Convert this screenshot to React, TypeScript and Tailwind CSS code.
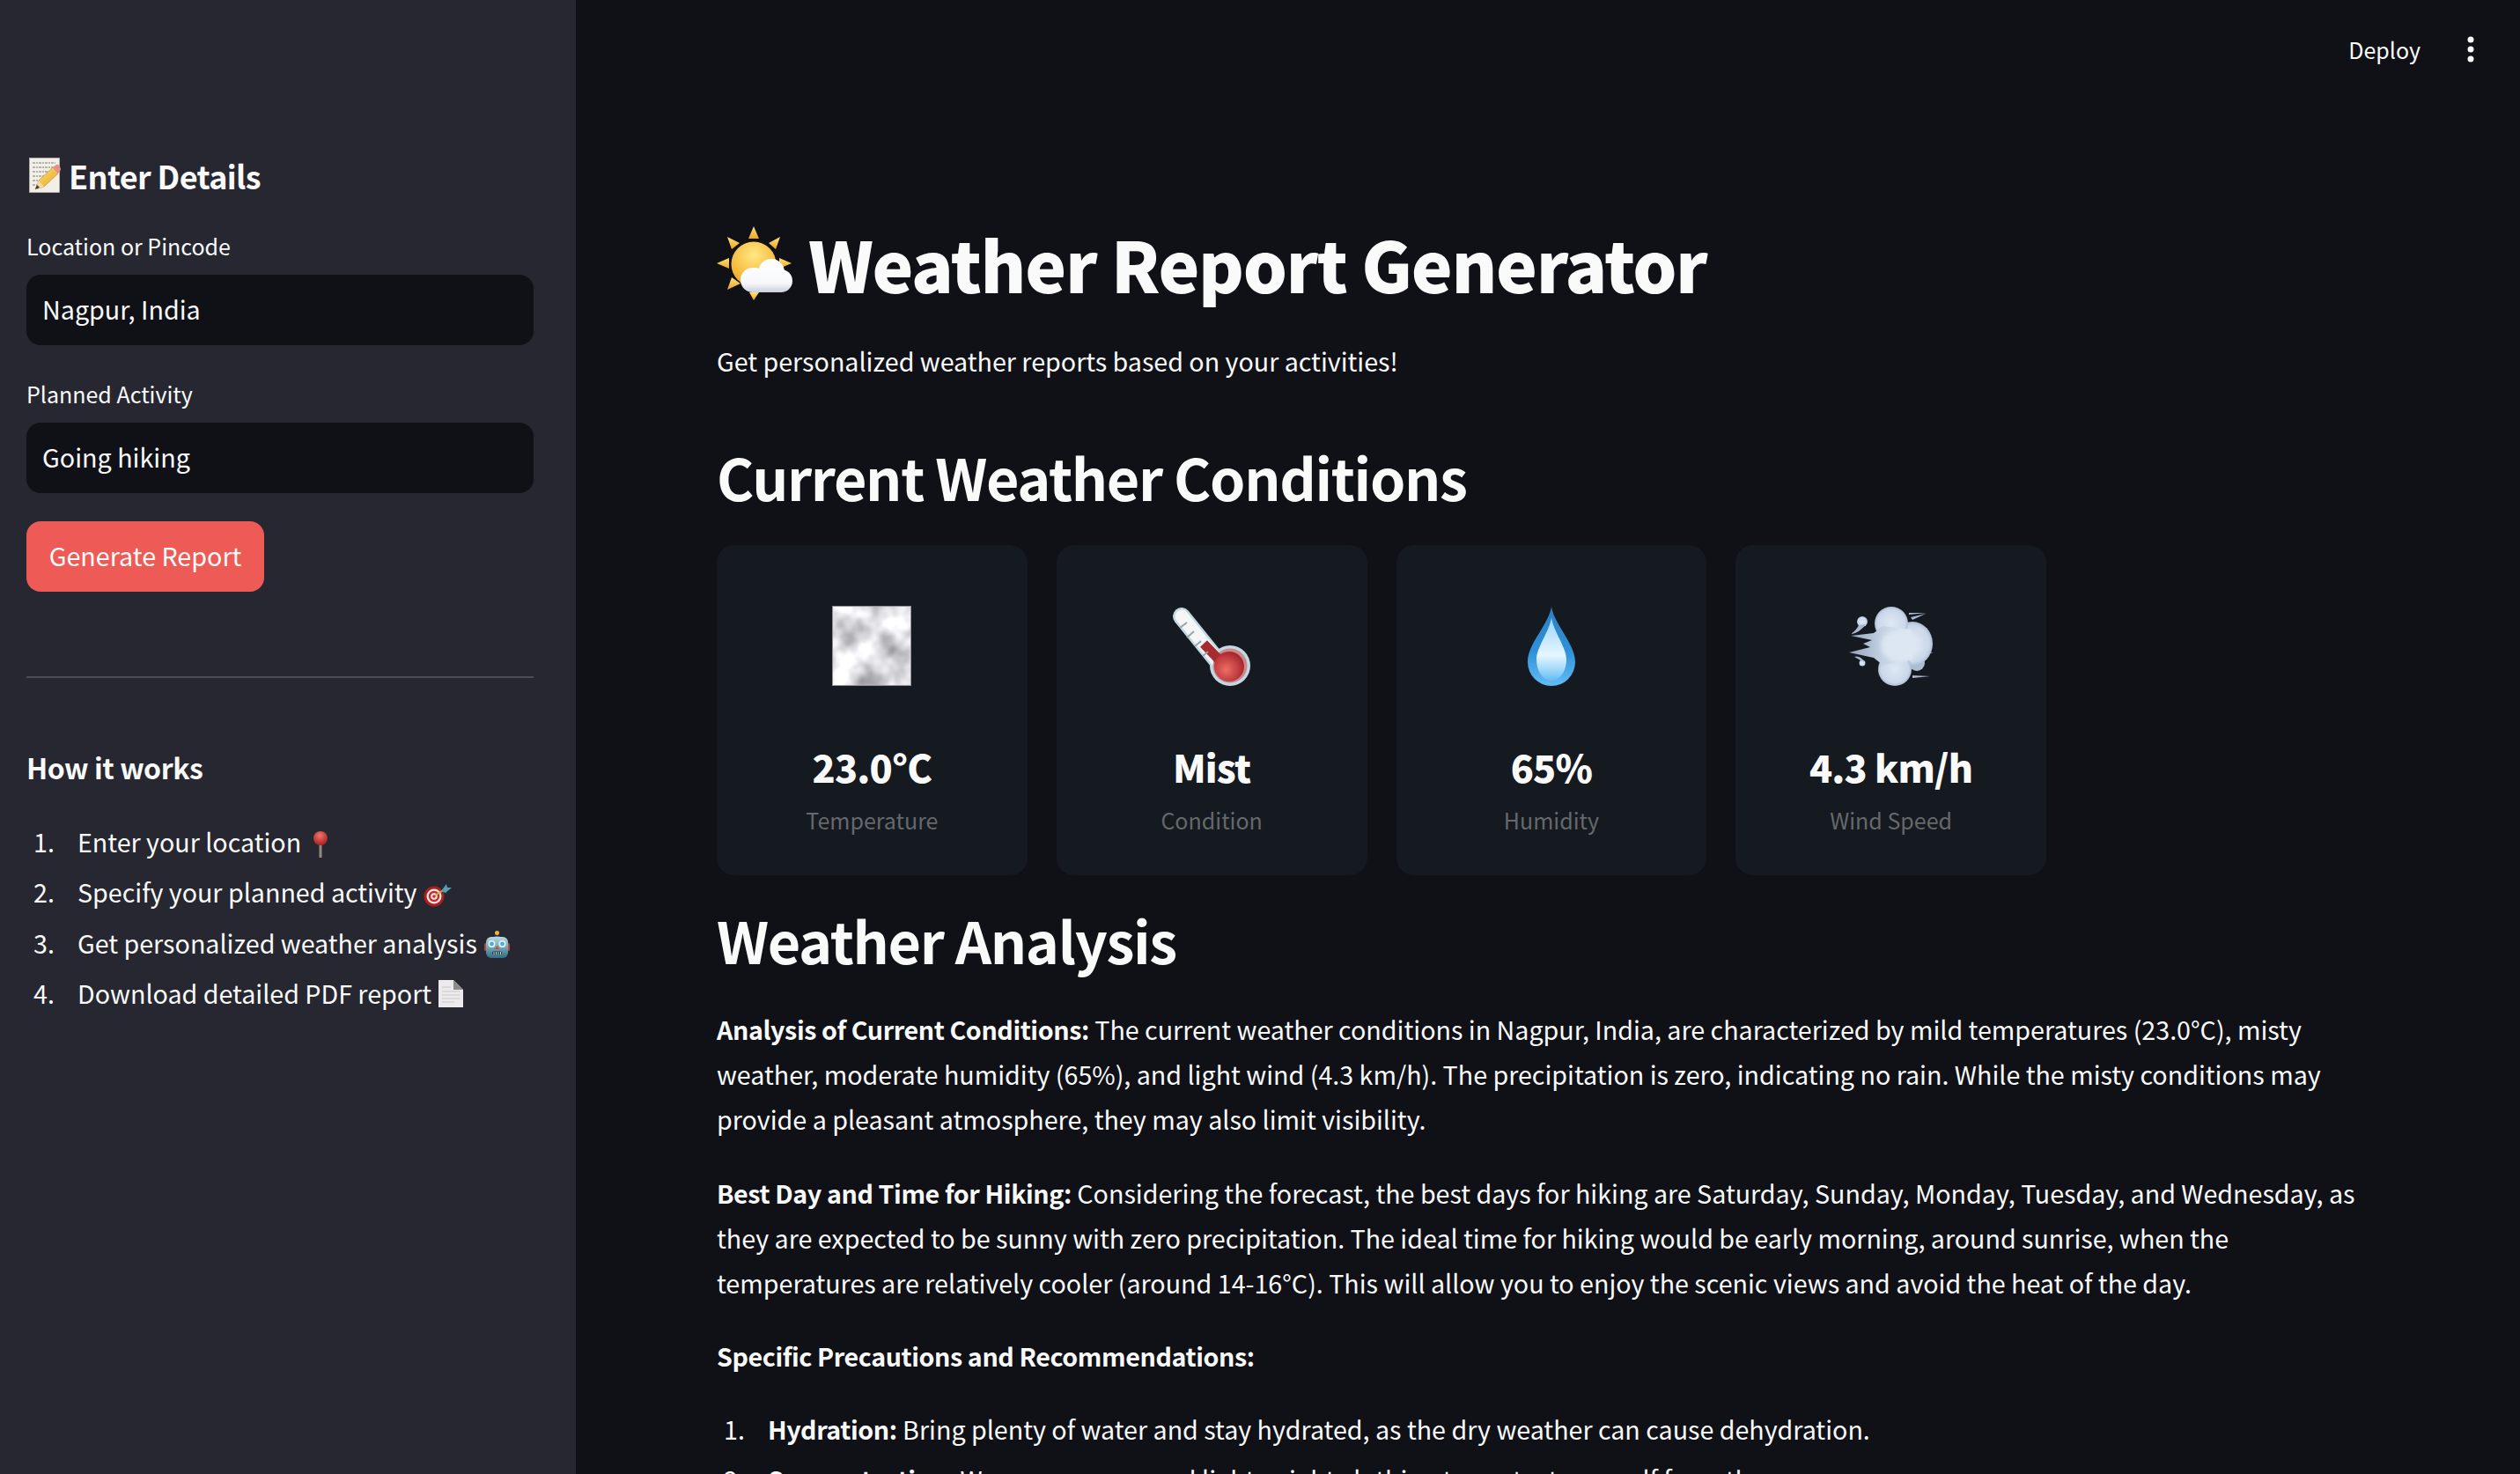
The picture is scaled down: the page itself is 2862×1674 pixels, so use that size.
import React from 'react';

function MemoIcon() {
  return (
    <svg width="36" height="40" viewBox="0 0 36 40" className="ml-[3px] shrink-0">
      <defs>
        <linearGradient id="pencil" x1="0" y1="0" x2="1" y2="1">
          <stop offset="0" stopColor="#fde17a" />
          <stop offset="1" stopColor="#e9a51f" />
        </linearGradient>
      </defs>
      <rect x="0.5" y="0.5" width="34" height="39" fill="#f1efe8" stroke="#c9c7c0" strokeWidth="0.6" />
      <g stroke="#6d6b66" strokeWidth="0.9" strokeDasharray="3 1 2 1">
        <line x1="4" y1="6" x2="30" y2="6" />
        <line x1="4" y1="11" x2="28" y2="11" />
        <line x1="4" y1="16" x2="29" y2="16" />
        <line x1="4" y1="21" x2="20" y2="21" />
        <line x1="4" y1="26" x2="14" y2="26" />
        <line x1="4" y1="31" x2="10" y2="31" />
      </g>
      <path d="M7 36 L11 26 L27 11 L33 18 L17 33 Z" fill="url(#pencil)" stroke="#a8791a" strokeWidth="0.5" />
      <path d="M7 36 L11 26 L17 33 Z" fill="#f4d9a8" />
      <path d="M7 36 L9 31 L12 34 Z" fill="#3b342b" />
      <path d="M27 11 L31 8 Q33 7 35 10 L36 13 Q36 15 33 18 Z" fill="#e58f92" />
    </svg>
  );
}

function PinIcon() {
  return (
    <svg width="16" height="30" viewBox="0 0 16 30" className="ml-[14px] inline-block align-[-6px]">
      <defs>
        <radialGradient id="pinHead" cx="0.45" cy="0.3" r="0.7">
          <stop offset="0" stopColor="#f0736c" />
          <stop offset="1" stopColor="#a9201f" />
        </radialGradient>
      </defs>
      <rect x="6.5" y="13" width="3" height="17" fill="#8f8a84" />
      <circle cx="8" cy="8" r="8" fill="url(#pinHead)" />
    </svg>
  );
}

function TargetIcon() {
  return (
    <svg width="32" height="27" viewBox="0 0 32 27" className="ml-[7px] inline-block align-[-5px]">
      <circle cx="12" cy="15" r="11.5" fill="#a82020" />
      <circle cx="12" cy="15" r="8.5" fill="#f1e6e2" />
      <circle cx="12" cy="15" r="6.2" fill="#c62d2a" />
      <circle cx="12" cy="15" r="3.8" fill="#f1e6e2" />
      <circle cx="12" cy="15" r="1.8" fill="#c62d2a" />
      <line x1="13" y1="14" x2="24" y2="7" stroke="#d7b04a" strokeWidth="1.6" />
      <path d="M20 9 L26 1 L27 5 L32 5 L25 11 Z" fill="#4fa3b5" />
    </svg>
  );
}

function RobotIcon() {
  return (
    <svg width="29" height="31" viewBox="0 0 29 31" className="ml-[8px] inline-block align-[-5px]">
      <defs>
        <linearGradient id="robotFace" x1="0" y1="0" x2="0" y2="1">
          <stop offset="0" stopColor="#b7dae3" />
          <stop offset="1" stopColor="#2f6f82" />
        </linearGradient>
      </defs>
      <circle cx="14.5" cy="2.5" r="2.5" fill="#f0b43a" />
      <path d="M9 8 Q14.5 3 20 8 Z" fill="#6d5aa8" />
      <rect x="0" y="14" width="3" height="9" rx="1.5" fill="#b5473f" />
      <rect x="26" y="14" width="3" height="9" rx="1.5" fill="#b5473f" />
      <rect x="2" y="7" width="25" height="24" rx="6" fill="url(#robotFace)" />
      <circle cx="8.5" cy="15" r="4" fill="#e8f5f9" />
      <circle cx="8.5" cy="15" r="2.4" fill="#4ab0d0" />
      <circle cx="20.5" cy="15" r="4" fill="#e8f5f9" />
      <circle cx="20.5" cy="15" r="2.4" fill="#4ab0d0" />
      <path d="M14.5 17 L17 21 L12 21 Z" fill="#d04a3c" />
      <rect x="9" y="23.5" width="11" height="3.5" rx="1.5" fill="#1e3a45" />
      <path d="M11 24 V27 M13.5 24 V27 M16 24 V27 M18.5 24 V27" stroke="#cfd8dc" strokeWidth="1" />
    </svg>
  );
}

function PageIcon() {
  return (
    <svg width="28" height="31" viewBox="0 0 28 31" className="ml-[8px] inline-block align-[-4px]">
      <path d="M0 0 H17 L28 11 V31 H0 Z" fill="#eceaea" />
      <path d="M17 0 L28 11 H17 Z" fill="#8b8b8b" />
      <g stroke="#c9c7c7" strokeWidth="1">
        <line x1="4" y1="8" x2="14" y2="8" />
        <line x1="4" y1="13" x2="24" y2="13" />
        <line x1="4" y1="17" x2="24" y2="17" />
        <line x1="4" y1="21" x2="24" y2="21" />
        <line x1="4" y1="25" x2="18" y2="25" />
      </g>
    </svg>
  );
}

function SunCloudIcon() {
  return (
    <svg width="86" height="85" viewBox="16 8 86 85" className="shrink-0">
      <defs>
        <linearGradient id="ray" x1="0" y1="0" x2="0" y2="1">
          <stop offset="0" stopColor="#fde27a" />
          <stop offset="1" stopColor="#eea522" />
        </linearGradient>
        <radialGradient id="sunBall" cx="0.5" cy="0.3" r="0.75">
          <stop offset="0" stopColor="#ffe883" />
          <stop offset="1" stopColor="#f0a51e" />
        </radialGradient>
        <linearGradient id="cloudFill" gradientUnits="userSpaceOnUse" x1="0" y1="46" x2="0" y2="84">
          <stop offset="0" stopColor="#ffffff" />
          <stop offset="0.7" stopColor="#f7f8fb" />
          <stop offset="1" stopColor="#c6ccda" />
        </linearGradient>
      </defs>
      <g fill="url(#ray)">
        <polygon points="58,8 52,22 64,22" />
        <polygon points="28,20 42,27 33,34" />
        <polygon points="88,20 75,27 83,34" />
        <polygon points="16,50 30,44 30,56" />
        <polygon points="101,50 87,44 87,56" />
        <polygon points="28,80 33,66 43,73" />
        <polygon points="58,92 53,83 64,83" />
      </g>
      <circle cx="58" cy="51" r="25.5" fill="url(#sunBall)" />
      <g fill="url(#cloudFill)">
        <circle cx="60" cy="65" r="10" />
        <circle cx="78" cy="60" r="15" />
        <circle cx="57" cy="69" r="14" />
        <circle cx="89" cy="70" r="13" />
        <rect x="56" y="66" width="34" height="17" />
      </g>
    </svg>
  );
}

function FogIcon() {
  return (
    <svg width="90" height="91" viewBox="0 0 90 91">
      <defs>
        <filter id="fogNoise" x="0" y="0" width="100%" height="100%" colorInterpolationFilters="sRGB">
          <feTurbulence type="fractalNoise" baseFrequency="0.028" numOctaves="3" seed="7" />
          <feColorMatrix
            type="matrix"
            values="0.9 0 0 0 0.4
                    0.9 0 0 0 0.4
                    0.9 0 0 0 0.42
                    0 0 0 0 1"
          />
        </filter>
      </defs>
      <rect x="0" y="0" width="90" height="91" filter="url(#fogNoise)" />
      <rect x="0.5" y="0.5" width="89" height="90" fill="none" stroke="#8f8f95" />
    </svg>
  );
}

function ThermometerIcon() {
  return (
    <svg width="92" height="90" viewBox="0 0 92 90">
      <defs>
        <radialGradient id="bulb" cx="0.4" cy="0.6" r="0.65">
          <stop offset="0" stopColor="#ee6d64" />
          <stop offset="1" stopColor="#a3222b" />
        </radialGradient>
      </defs>
      <line x1="12" y1="11" x2="58" y2="68" stroke="#c4d8e4" strokeWidth="20" strokeLinecap="round" />
      <circle cx="67" cy="67" r="23" fill="#c4d8e4" />
      <line x1="12" y1="11" x2="58" y2="68" stroke="#f4f6f8" strokeWidth="15" strokeLinecap="round" />
      <circle cx="67" cy="67" r="19.5" fill="#c98a8c" />
      <line x1="37" y1="42" x2="60" y2="66" stroke="#a72b2f" strokeWidth="11" />
      <circle cx="66" cy="68" r="17" fill="url(#bulb)" />
      <g stroke="#9aa3aa" strokeWidth="2">
        <line x1="10" y1="24" x2="18" y2="18" />
        <line x1="18" y1="35" x2="26" y2="28" />
        <line x1="27" y1="45" x2="34" y2="39" />
        <line x1="36" y1="56" x2="42" y2="51" />
      </g>
    </svg>
  );
}

function DropletIcon() {
  return (
    <svg width="54" height="90" viewBox="0 0 54 90">
      <defs>
        <linearGradient id="dropOuter" x1="0" y1="0" x2="0" y2="1">
          <stop offset="0" stopColor="#2b7fc4" />
          <stop offset="0.55" stopColor="#2f90d8" />
          <stop offset="1" stopColor="#62bdf5" />
        </linearGradient>
        <linearGradient id="dropInner" x1="0" y1="0" x2="0" y2="1">
          <stop offset="0" stopColor="#9bd6f8" />
          <stop offset="0.6" stopColor="#e6f6ff" />
          <stop offset="0.8" stopColor="#a8dcfa" />
          <stop offset="1" stopColor="#62bdf5" />
        </linearGradient>
      </defs>
      <path d="M27 0 C30 20 54 42 54 63 A27 27 0 0 1 0 63 C0 42 24 20 27 0 Z" fill="url(#dropOuter)" />
      <path d="M27 12 C29 28 44 46 44 60 C44 74 36 84 27 84 C18 84 10 74 10 60 C10 46 25 28 27 12 Z" fill="url(#dropInner)" />
    </svg>
  );
}

function WindIcon() {
  return (
    <svg width="95" height="90" viewBox="20 10 95 90">
      <defs>
        <radialGradient id="puff" cx="0.5" cy="0.5" r="0.55">
          <stop offset="0" stopColor="#dfe8f5" />
          <stop offset="0.75" stopColor="#cbd8e9" />
          <stop offset="1" stopColor="#9dadc6" />
        </radialGradient>
        <linearGradient id="streak" x1="0" y1="0" x2="1" y2="0">
          <stop offset="0" stopColor="#93a3ba" />
          <stop offset="0.55" stopColor="#c6d3e5" />
          <stop offset="1" stopColor="#dde6f3" />
        </linearGradient>
        <filter id="soft" x="-20%" y="-20%" width="140%" height="140%">
          <feGaussianBlur stdDeviation="2.5" />
        </filter>
      </defs>
      <path d="M88 17 L108 17 L88 19 Z M90 22 L107 18 L92 25 Z M92 88 L112 89 L92 91 Z M108 62 L116 62 L108 64 Z" fill="#a9b8cf" />
      <circle cx="35" cy="27" r="6" fill="url(#puff)" />
      <path d="M31 31 Q28 37 22 41 Q32 40 39 30 Z" fill="#a9b8cf" />
      <circle cx="35" cy="74" r="3.5" fill="url(#puff)" />
      <path d="M26 67 Q30 69 33 71 L38 73 Q32 65 26 67 Z" fill="#a9b8cf" />
      <circle cx="97" cy="74" r="9" fill="#aebcd2" />
      <ellipse cx="92" cy="52" rx="23" ry="25" fill="url(#puff)" />
      <circle cx="68" cy="29" r="19" fill="url(#puff)" />
      <circle cx="72" cy="81" r="19" fill="url(#puff)" />
      <path d="M22 43 L48 40 L58 32 L90 36 L92 70 L58 76 L48 68 L20 62 L44 56 L36 52 L46 48 Z" fill="url(#streak)" />
      <ellipse cx="78" cy="54" rx="22" ry="18" fill="#dde6f3" filter="url(#soft)" />
    </svg>
  );
}

const cards = [
  { icon: <FogIcon />, value: '23.0°C', label: 'Temperature' },
  { icon: <ThermometerIcon />, value: 'Mist', label: 'Condition' },
  { icon: <DropletIcon />, value: '65%', label: 'Humidity' },
  { icon: <WindIcon />, value: '4.3 km/h', label: 'Wind Speed' },
];

const steps = [
  { text: 'Enter your location', icon: <PinIcon /> },
  { text: 'Specify your planned activity', icon: <TargetIcon /> },
  { text: 'Get personalized weather analysis', icon: <RobotIcon /> },
  { text: 'Download detailed PDF report', icon: <PageIcon /> },
];

export default function App() {
  return (
    <div className="flex h-[1674px] overflow-hidden bg-[#0f1117] text-[#fafafa] font-['Noto_Sans_CJK_SC','Liberation_Sans',sans-serif]">
      {/* Sidebar */}
      <aside className="w-[654px] shrink-0 bg-[#262730] pl-[30px] pr-[48px] pt-[169px]">
        <h2 className="flex h-[60px] items-center gap-[9px] text-[36px] font-bold tracking-[-0.65px]">
          <MemoIcon />
          Enter Details
        </h2>
        <label className="mt-[32px] block h-[36px] text-[25px] leading-[36px]">Location or Pincode</label>
        <input
          readOnly
          defaultValue="Nagpur, India"
          className="mt-[15px] block h-[80px] w-[576px] rounded-[16px] bg-[#0f1117] pb-[3px] pl-[18px] pr-[19px] text-[28.7px] outline-none"
        />
        <label className="mt-[37px] block h-[36px] text-[25px] leading-[36px]">Planned Activity</label>
        <input
          readOnly
          defaultValue="Going hiking"
          className="mt-[15px] block h-[80px] w-[576px] rounded-[16px] bg-[#0f1117] pb-[3px] pl-[18px] pr-[19px] text-[28.7px] outline-none"
        />
        <button className="mt-[32px] block h-[80px] w-[270px] rounded-[16px] bg-[#ee5b56] pb-[3px] text-[28.7px]">Generate Report</button>
        <hr className="mt-[96px] border-t-2 border-[#4b4c55]" />
        <h3 className="mt-[77px] h-[48px] text-[32px] font-bold leading-[48px] tracking-[-0.45px]">How it works</h3>
        <ol className="mt-[32px] flex flex-col text-[28.65px] leading-[57.3px]">
          {steps.map((s, i) => (
            <li key={s.text} className="flex">
              <span className="w-[58px] shrink-0 pl-[8px]">{i + 1}.</span>
              <span>
                {s.text}
                {s.icon}
              </span>
            </li>
          ))}
        </ol>
      </aside>

      {/* Main */}
      <main className="relative min-w-0 flex-1 px-[160px]">
        <div className="absolute right-[52px] top-[40px] flex items-center gap-[53px]">
          <span className="text-[25px] leading-[32px]">Deploy</span>
          <svg width="8" height="30" viewBox="0 0 8 30" fill="#fafafa">
            <circle cx="4" cy="4" r="3.5" />
            <circle cx="4" cy="15" r="3.5" />
            <circle cx="4" cy="26" r="3.5" />
          </svg>
        </div>

        <h1 className="mt-[246px] flex h-[106px] items-center gap-[18px] text-[79px] font-black leading-[106px] tracking-[-1.4px]">
          <SunCloudIcon />
          Weather Report Generator
        </h1>
        <p className="mt-[32px] text-[28.65px] leading-[51px]">Get personalized weather reports based on your activities!</p>
        <h2 className="mt-[61px] text-[64.6px] font-bold leading-[90px] tracking-[-1.35px]">Current Weather Conditions</h2>
        <div className="mt-[33px] grid w-[1510px] grid-cols-4 gap-[33px]">
          {cards.map((c) => (
            <div key={c.label} className="flex h-[375px] flex-col items-center rounded-[20px] bg-[#151920] pt-[69px]">
              <div className="flex h-[91px] items-center justify-center">{c.icon}</div>
              <div className="mt-[63px] text-[43px] font-black leading-[56px] tracking-[-0.8px]">{c.value}</div>
              <div className="mt-[13px] text-[25px] leading-[40px] text-[#66686c]">{c.label}</div>
            </div>
          ))}
        </div>
        <h2 className="mt-[28px] text-[64.6px] font-bold leading-[90px] tracking-[-1.35px]">Weather Analysis</h2>
        <p className="mt-[31px] text-[28.65px] leading-[51px]">
          <strong className="tracking-[-0.4px]">Analysis of Current Conditions:</strong> The current weather conditions in Nagpur, India, are characterized by mild temperatures (23.0°C), misty weather, moderate humidity (65%), and light wind (4.3 km/h). The precipitation is zero, indicating no rain. While the misty conditions may provide a pleasant atmosphere, they may also limit visibility.
        </p>
        <p className="mt-[33px] text-[28.65px] leading-[51px]">
          <strong className="tracking-[-0.4px]">Best Day and Time for Hiking:</strong> Considering the forecast, the best days for hiking are Saturday, Sunday, Monday, Tuesday, and Wednesday, as they are expected to be sunny with zero precipitation. The ideal time for hiking would be early morning, around sunrise, when the temperatures are relatively cooler (around 14-16°C). This will allow you to enjoy the scenic views and avoid the heat of the day.
        </p>
        <p className="mt-[32px] text-[28.65px] leading-[51px]">
          <strong className="tracking-[-0.4px]">Specific Precautions and Recommendations:</strong>
        </p>
        <ol className="mt-[32px] text-[28.65px] leading-[51px]">
          <li className="flex">
            <span className="w-[58px] shrink-0 pl-[8px]">1.</span>
            <span>
              <strong className="tracking-[-0.4px]">Hydration:</strong> Bring plenty of water and stay hydrated, as the dry weather can cause dehydration.
            </span>
          </li>
          <li className="mt-[6px] flex">
            <span className="w-[58px] shrink-0 pl-[8px]">2.</span>
            <span>
              <strong className="tracking-[-0.4px]">Sun protection:</strong> Wear sunscreen and lightweight clothing to protect yourself from the sun.
            </span>
          </li>
        </ol>
      </main>
    </div>
  );
}
